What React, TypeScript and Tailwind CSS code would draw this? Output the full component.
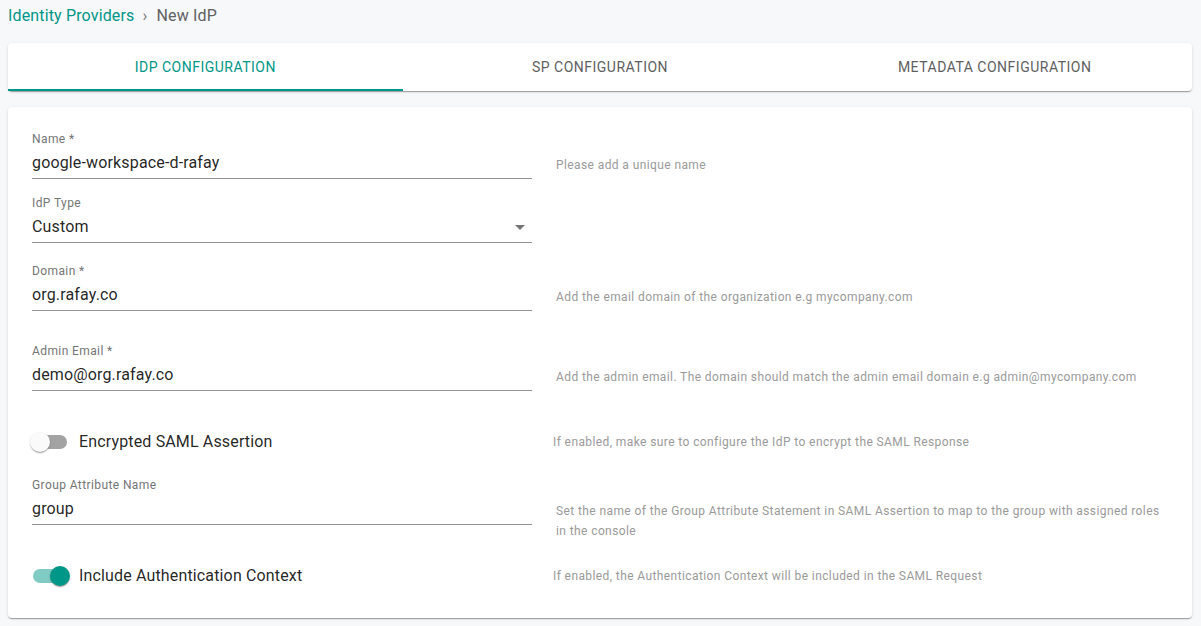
import React from "react";

const shadow =
  "shadow-[0_2px_1px_-1px_rgba(0,0,0,0.2),0_1px_1px_0_rgba(0,0,0,0.14),0_1px_3px_0_rgba(0,0,0,0.12)]";

function Field({
  label,
  value,
  helper,
  select,
  className,
}: {
  label: string;
  value: string;
  helper?: string;
  select?: boolean;
  className?: string;
}) {
  return (
    <div className={"grid h-12 grid-cols-[500px_1fr] gap-x-6 " + (className ?? "")}>
      <div>
        <div className="text-xs leading-4 tracking-[0.4px] text-[#757575]">{label}</div>
        <div className="relative flex h-8 items-center border-b border-[#949494] pt-[1px] text-base tracking-[0.15px] text-[rgba(0,0,0,0.87)]">
          {value}
          {select && (
            <svg className="absolute right-0 top-[4px] h-6 w-6" viewBox="0 0 24 24">
              <path d="M7 10l5 5 5-5z" fill="#757575" />
            </svg>
          )}
        </div>
      </div>
      <div className="pt-6 text-xs leading-5 tracking-[0.4px] text-[#9a9a9a]">{helper}</div>
    </div>
  );
}

function SwitchRow({
  on,
  label,
  helper,
  className,
}: {
  on: boolean;
  label: string;
  helper: string;
  className?: string;
}) {
  return (
    <div className={"grid h-[38px] grid-cols-[497px_1fr] items-center gap-x-6 " + (className ?? "")}>
      <div className="flex items-center">
        <div className="relative ml-[-2px] h-5 w-10">
          <div
            className={
              "absolute left-[3px] top-[3px] h-[14px] w-[34px] rounded-full " +
              (on ? "bg-[#80cbc4]" : "bg-[#a3a3a3]")
            }
          />
          <div
            className={
              "absolute top-0 h-5 w-5 rounded-full shadow-[0_2px_1px_-1px_rgba(0,0,0,0.2),0_1px_1px_0_rgba(0,0,0,0.14),0_1px_3px_0_rgba(0,0,0,0.12)] " +
              (on ? "left-5 bg-[#009688]" : "left-0 bg-[#fafafa]")
            }
          />
        </div>
        <span className="ml-[9px] text-base tracking-[0.15px] text-[rgba(0,0,0,0.87)]">{label}</span>
      </div>
      <div className="text-xs leading-5 tracking-[0.4px] text-[#9a9a9a]">{helper}</div>
    </div>
  );
}

export default function App() {
  return (
    <div className="min-h-screen bg-[#f7f8fa] pl-2 pr-[9px] font-['Roboto',sans-serif]">
      <div className="flex h-[31px] items-center pt-[1px] text-base tracking-[0.15px]">
        <span className="text-[#009688]">Identity Providers</span>
        <span className="mx-[8px] text-[#757575]">›</span>
        <span className="ml-[1px] text-[#616161]">New IdP</span>
      </div>

      <div className={"mt-3 rounded bg-white " + shadow}>
        <div className="grid h-12 grid-cols-3">
          <div className="relative flex items-center justify-center text-sm uppercase tracking-[0.5px] text-[#009688]">
            IdP Configuration
            <div className="absolute bottom-0 left-0 right-0 h-[2px] bg-[#009688]" />
          </div>
          <div className="flex items-center justify-center text-sm uppercase tracking-[0.5px] text-[#5f5f5f]">
            SP Configuration
          </div>
          <div className="flex items-center justify-center text-sm uppercase tracking-[0.5px] text-[#5f5f5f]">
            Metadata Configuration
          </div>
        </div>
      </div>

      <div className={"mt-4 rounded bg-white px-6 pb-[23px] pt-6 " + shadow}>
        <Field label="Name *" value="google-workspace-d-rafay" helper="Please add a unique name" />
        <Field className="mt-4" label="IdP Type" value="Custom" select />
        <Field
          className="mt-5"
          label="Domain *"
          value="org.rafay.co"
          helper="Add the email domain of the organization e.g mycompany.com"
        />
        <Field
          className="mt-8"
          label="Admin Email *"
          value="demo@org.rafay.co"
          helper="Add the admin email. The domain should match the admin email domain e.g admin@mycompany.com"
        />
        <SwitchRow
          className="mt-8"
          on={false}
          label="Encrypted SAML Assertion"
          helper="If enabled, make sure to configure the IdP to encrypt the SAML Response"
        />
        <Field
          className="mt-4"
          label="Group Attribute Name"
          value="group"
          helper="Set the name of the Group Attribute Statement in SAML Assertion to map to the group with assigned roles in the console"
        />
        <SwitchRow
          className="mt-8"
          on={true}
          label="Include Authentication Context"
          helper="If enabled, the Authentication Context will be included in the SAML Request"
        />
      </div>
    </div>
  );
}
